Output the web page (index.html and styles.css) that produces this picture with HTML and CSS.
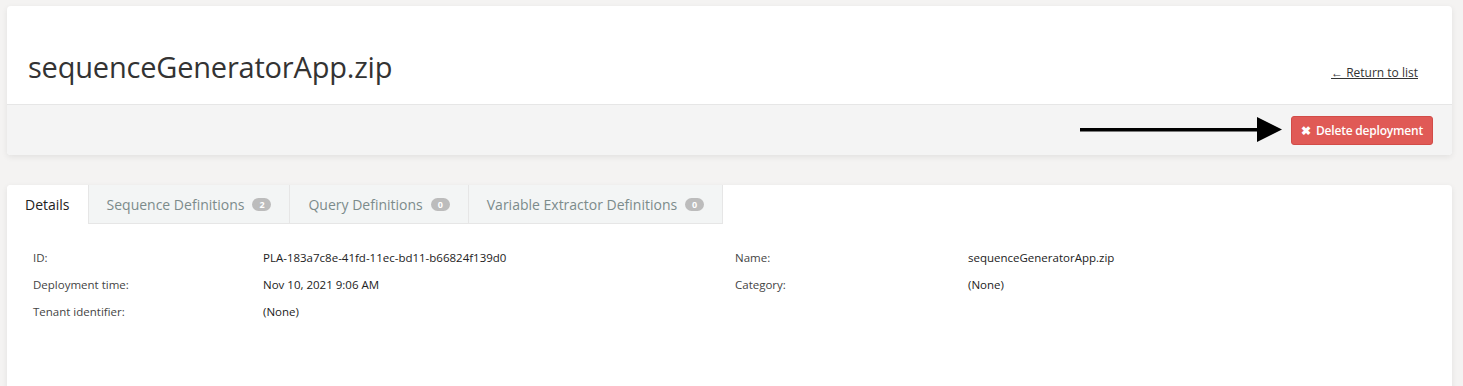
FILE: index.html
```html
<!DOCTYPE html>
<html>
  <head>
    <meta charset="UTF-8" />
    <title>sequenceGeneratorApp.zip</title>
    <link rel="stylesheet" href="styles.css">
  </head>
  <body>
    <div class="page">
      <div class="card header-card">
        <div class="header-top">
          <h1 class="title">sequenceGeneratorApp.zip</h1>
          <a class="back-link" href="#">&larr; Return to list</a>
        </div>
        <div class="header-actions">
          <svg class="pointer-arrow" width="203" height="26" viewBox="0 0 203 26">
            <rect x="0" y="11" width="180" height="3.5" fill="#000" />
            <polygon points="177,0 202,12.5 177,25" fill="#000" />
          </svg>
          <button class="btn-danger">
            <span class="btn-icon">&#10006;</span> Delete deployment
          </button>
        </div>
      </div>

      <div class="card tabs-card">
        <div class="tab-strip">
          <div class="tab active">Details</div>
          <div class="tab">Sequence Definitions <span class="badge">2</span></div>
          <div class="tab">Query Definitions <span class="badge">0</span></div>
          <div class="tab">Variable Extractor Definitions <span class="badge">0</span></div>
          <div class="tab-fill"></div>
        </div>
        <div class="details">
          <div class="label">ID:</div>
          <div class="value">PLA-183a7c8e-41fd-11ec-bd11-b66824f139d0</div>
          <div class="label">Name:</div>
          <div class="value">sequenceGeneratorApp.zip</div>

          <div class="label">Deployment time:</div>
          <div class="value">Nov 10, 2021 9:06 AM</div>
          <div class="label">Category:</div>
          <div class="value">(None)</div>

          <div class="label">Tenant identifier:</div>
          <div class="value">(None)</div>
          <div></div>
          <div></div>
        </div>
      </div>
    </div>
  </body>
</html>
```

FILE: styles.css
```css
:root {
  --page-bg: #f4f3f2;
  --card-bg: #ffffff;
  --footer-bg: #f4f4f4;
  --line: #e6e6e6;
  --text: #333333;
  --tab-text: #7c8b8b;
  --tab-bg: #f3f5f5;
  --badge-bg: #bcbcbc;
  --danger: #e05a56;
  --danger-border: #d24c48;
}

body {
  margin: 0;
  padding: 0;
  background: var(--page-bg);
  font-family: "Open Sans", sans-serif;
  color: var(--text);
  overflow: hidden;
}

.page {
  display: flex;
  flex-direction: column;
  gap: 30px;
  padding: 6px 11px 0 7px;
}

.card {
  background: var(--card-bg);
  border-radius: 4px;
  box-shadow: 0 2px 6px rgba(0, 0, 0, 0.08);
}

.header-top {
  height: 98px;
  display: flex;
  align-items: center;
  justify-content: space-between;
  padding: 0 34px 0 21px;
  border-bottom: 1px solid var(--line);
}

.title {
  margin: 0;
  padding-top: 22px;
  font-size: 29px;
  font-weight: 400;
  color: #333;
  letter-spacing: -0.2px;
}

.back-link {
  padding-top: 34px;
  font-size: 12px;
  color: #333;
  text-decoration: underline;
}

.header-actions {
  height: 50px;
  display: flex;
  align-items: center;
  justify-content: flex-end;
  padding: 0 19px;
  background: var(--footer-bg);
  border-radius: 0 0 4px 4px;
  position: relative;
}

.pointer-arrow {
  position: absolute;
  right: 169px;
  top: 12px;
}

.btn-danger {
  all: unset;
  height: 27px;
  padding: 0 9px 0 9px;
  display: flex;
  align-items: center;
  gap: 5px;
  background: var(--danger);
  border: 1px solid var(--danger-border);
  border-radius: 3px;
  color: #fff;
  font-size: 12px;
  font-weight: 600;
  letter-spacing: -0.2px;
}

.btn-icon {
  font-size: 12px;
}

.tabs-card {
  height: 220px;
  border-radius: 4px 4px 0 0;
}

.tab-strip {
  display: flex;
  height: 39px;
}

.tab {
  display: flex;
  align-items: center;
  gap: 8px;
  padding: 0 18px;
  font-size: 14px;
  color: var(--tab-text);
  background: var(--tab-bg);
  border-left: 1px solid var(--line);
  border-bottom: 1px solid var(--line);
}

.tab.active {
  color: #222;
  background: var(--card-bg);
  border: none;
  border-radius: 4px 0 0 0;
}

.tab-fill {
  flex: 1;
  border-left: 1px solid var(--line);
}

.badge {
  display: inline-block;
  min-width: 9px;
  height: 13px;
  line-height: 13px;
  padding: 0 5px;
  border-radius: 7px;
  background: var(--badge-bg);
  color: #fff;
  font-size: 9px;
  font-weight: 700;
  text-align: center;
}

.details {
  display: grid;
  grid-template-columns: 230px 472px 233px 1fr;
  grid-auto-rows: 27px;
  align-items: center;
  padding: 20px 26px 0 26px;
  font-size: 11.5px;
}

.label {
  color: #444;
}

.value {
  color: #222;
}
```
